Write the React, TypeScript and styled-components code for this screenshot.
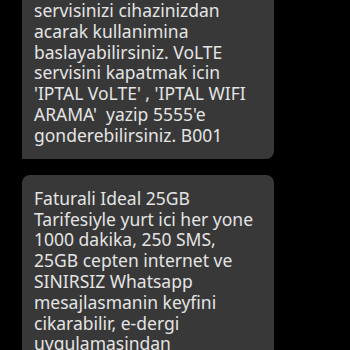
import React from "react";
import styled, { createGlobalStyle } from "styled-components";

const Global = createGlobalStyle`
  html, body { margin: 0; padding: 0; background: #000; }
  body { width: 350px; height: 350px; overflow: hidden; }
`;

const Screen = styled.div`
  width: 350px;
  height: 350px;
  background: #000;
  display: flex;
  flex-direction: column;
  gap: 16px;
  padding-left: 22px;
  box-sizing: border-box;
  overflow: hidden;
`;

const Bubble = styled.div<{ $top?: boolean }>`
  width: 252px;
  box-sizing: border-box;
  background: #383838;
  color: #e4e4e4;
  font-family: "Noto Sans", "Open Sans", sans-serif;
  font-size: 17.5px;
  line-height: 20.8px;
  padding: ${(p) => (p.$top ? "0 4px 13.4px 12px" : "12.8px 4px 0 12px")};
  border-radius: ${(p) => (p.$top ? "0 0 8px 0" : "8px 8px 0 0")};
  white-space: pre;
  flex-shrink: 0;
`;

const Line = styled.div``;

const first = [
  "servisinizi cihazinizdan",
  "acarak kullanimina",
  "baslayabilirsiniz. VoLTE",
  "servisini kapatmak icin",
  "'IPTAL VoLTE' , 'IPTAL WIFI",
  "ARAMA'  yazip 5555'e",
  "gonderebilirsiniz. B001",
];

const second = [
  "Faturali Ideal 25GB",
  "Tarifesiyle yurt ici her yone",
  "1000 dakika, 250 SMS,",
  "25GB cepten internet ve",
  "SINIRSIZ Whatsapp",
  "mesajlasmanin keyfini",
  "cikarabilir, e-dergi",
  "uygulamasindan",
];

export default function App() {
  return (
    <>
      <Global />
      <Screen>
        <Bubble $top>
          {first.map((l, i) => (
            <Line key={i}>{l}</Line>
          ))}
        </Bubble>
        <Bubble>
          {second.map((l, i) => (
            <Line key={i}>{l}</Line>
          ))}
        </Bubble>
      </Screen>
    </>
  );
}
